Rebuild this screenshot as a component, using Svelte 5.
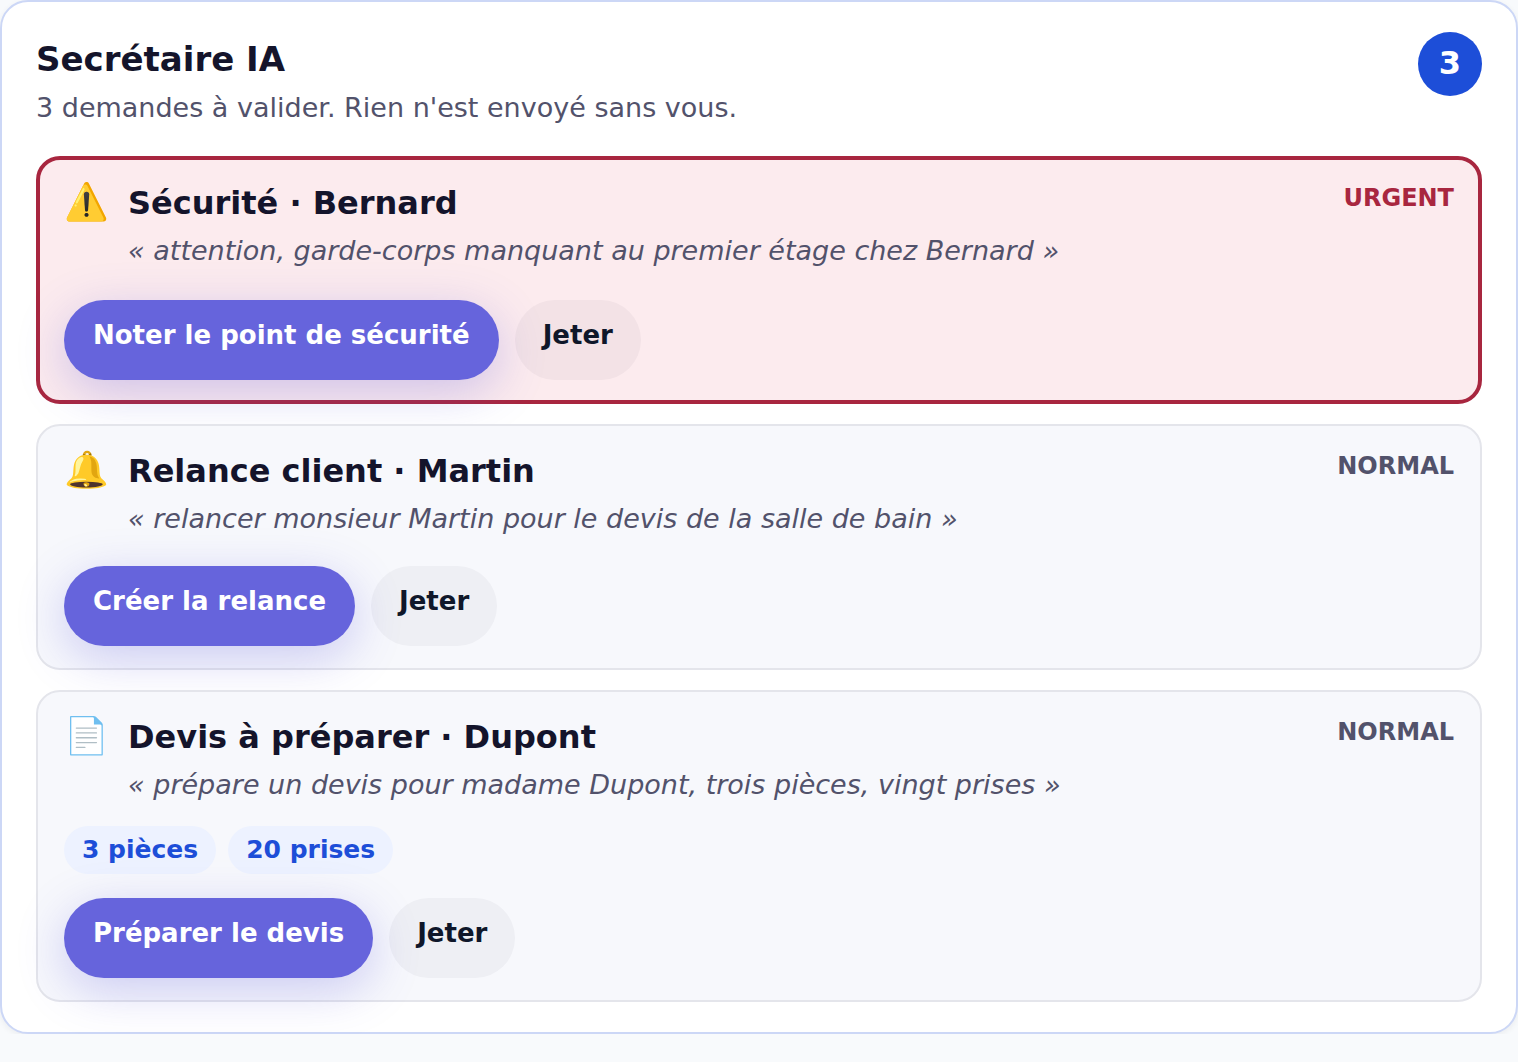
<script>
  let requests = $state([
    {
      id: 1,
      icon: "⚠️",
      title: "Sécurité · Bernard",
      quote: "attention, garde-corps manquant au premier étage chez Bernard",
      urgent: true,
      tags: [],
      action: "Noter le point de sécurité",
    },
    {
      id: 2,
      icon: "🔔",
      title: "Relance client · Martin",
      quote: "relancer monsieur Martin pour le devis de la salle de bain",
      urgent: false,
      tags: [],
      action: "Créer la relance",
    },
    {
      id: 3,
      icon: "📄",
      title: "Devis à préparer · Dupont",
      quote: "prépare un devis pour madame Dupont, trois pièces, vingt prises",
      urgent: false,
      tags: ["3 pièces", "20 prises"],
      action: "Préparer le devis",
    },
  ]);

  const remove = (id) => {
    requests = requests.filter((request) => request.id !== id);
  };
</script>

<main>
  <header>
    <div>
      <h1>Secrétaire IA</h1>
      <p class="subtitle">
        {requests.length} demandes à valider. Rien n'est envoyé sans vous.
      </p>
    </div>
    <span class="count">{requests.length}</span>
  </header>

  <div class="list">
    {#each requests as request (request.id)}
      <article class:urgent={request.urgent}>
        <div class="top">
          <span class="icon" aria-hidden="true">{request.icon}</span>
          <div class="text">
            <h2>{request.title}</h2>
            <p class="quote">« {request.quote} »</p>
          </div>
          <span class="priority">{request.urgent ? "URGENT" : "NORMAL"}</span>
        </div>
        {#if request.tags.length}
          <div class="tags">
            {#each request.tags as tag}
              <span class="tag">{tag}</span>
            {/each}
          </div>
        {/if}
        <div class="actions">
          <button class="primary" onclick={() => remove(request.id)}
            >{request.action}</button
          >
          <button onclick={() => remove(request.id)}>Jeter</button>
        </div>
      </article>
    {/each}
  </div>
</main>

<style>
  :global(body) {
    margin: 0;
    background: #f8fafc;
    font-family: "DejaVu Sans", sans-serif;
  }

  * {
    margin: 0;
    box-sizing: border-box;
  }

  main {
    padding: 30px 34px;
    background: #fff;
    border: 2px solid #ccd7f6;
    border-radius: 28px;
    box-shadow: 0 2px 6px rgba(15, 23, 42, 0.06);
    color: #14142b;
  }

  header {
    display: flex;
    justify-content: space-between;
    align-items: flex-start;
    margin-bottom: 26px;
  }

  h1 {
    font-size: 34px;
    line-height: 54px;
  }

  .subtitle {
    font-size: 27px;
    line-height: 44px;
    color: #52526b;
  }

  .count {
    width: 64px;
    height: 64px;
    border-radius: 50%;
    background: #1d4ed8;
    color: #fff;
    font-size: 32px;
    font-weight: bold;
    line-height: 62px;
    text-align: center;
  }

  .list {
    display: flex;
    flex-direction: column;
    gap: 20px;
  }

  article {
    padding: 22px 26px;
    background: #f7f8fc;
    border: 2px solid #e4e5eb;
    border-radius: 24px;
  }

  article.urgent {
    padding: 20px 24px;
    background: #fcebee;
    border: 4px solid #a8263f;
  }

  .top {
    display: flex;
    align-items: flex-start;
    gap: 20px;
  }

  .icon {
    width: 44px;
    font-size: 36px;
    line-height: 44px;
  }

  .text {
    flex: 1;
  }

  h2 {
    font-size: 32px;
    line-height: 46px;
  }

  .quote {
    margin-top: 2px;
    font-size: 27px;
    font-style: italic;
    line-height: 46px;
    color: #52526b;
  }

  .priority {
    font-size: 24px;
    font-weight: bold;
    line-height: 36px;
    color: #52526b;
  }

  .urgent .priority {
    color: #a8263f;
  }

  .tags {
    display: flex;
    gap: 12px;
    margin-top: 18px;
  }

  .tag {
    padding: 0 18px;
    border-radius: 24px;
    background: #edf2ff;
    color: #1d4ed8;
    font-size: 25px;
    font-weight: bold;
    line-height: 48px;
  }

  .actions {
    display: flex;
    gap: 16px;
    margin-top: 24px;
  }

  .urgent .actions {
    margin-top: 26px;
  }

  button {
    padding: 15px 28px 25px;
    border: none;
    border-radius: 40px;
    background: rgba(15, 23, 42, 0.04);
    color: #0f172a;
    font-family: inherit;
    font-size: 26px;
    font-weight: bold;
    line-height: 40px;
    cursor: pointer;
  }

  button.primary {
    padding: 15px 29px 25px;
    background: #6664dc;
    color: #fff;
    box-shadow: 0 12px 48px rgba(88, 86, 220, 0.28);
  }
</style>
